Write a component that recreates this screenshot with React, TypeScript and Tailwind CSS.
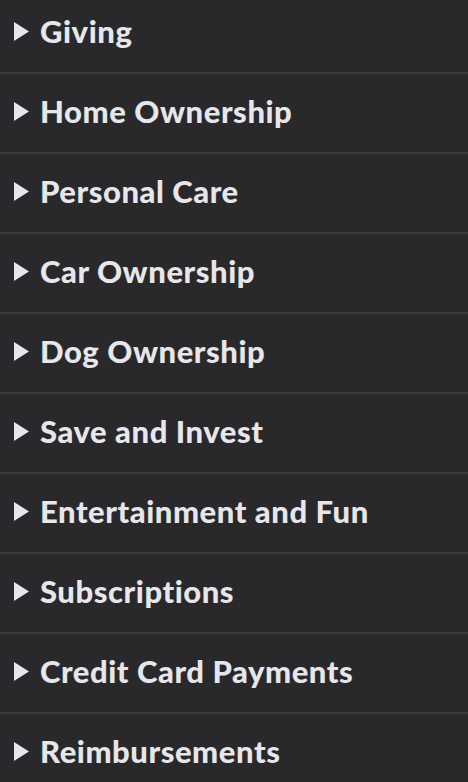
const categories = [
  "Giving",
  "Home Ownership",
  "Personal Care",
  "Car Ownership",
  "Dog Ownership",
  "Save and Invest",
  "Entertainment and Fun",
  "Subscriptions",
  "Credit Card Payments",
  "Reimbursements",
];

function Caret() {
  return (
    <svg width="15" height="19" viewBox="0 0 15 19" className="shrink-0">
      <polygon points="0,0 15,9.5 0,19" fill="#e6e6eb" />
    </svg>
  );
}

export default function App() {
  return (
    <div className="h-[782px] w-[468px] overflow-hidden bg-[#29292b] font-['Lato','Liberation_Sans',sans-serif]">
      <ul className="-mt-[6px]">
        {categories.map((name) => (
          <li
            key={name}
            className="flex h-[80px] items-center gap-[11px] border-b-2 border-[#3c3c3e] pl-[14px] pb-[4px]"
          >
            <Caret />
            <span className="text-[31px] font-black leading-none tracking-[0.55px] text-[#e6e6eb] [font-variant-ligatures:none]">
              {name}
            </span>
          </li>
        ))}
      </ul>
    </div>
  );
}
